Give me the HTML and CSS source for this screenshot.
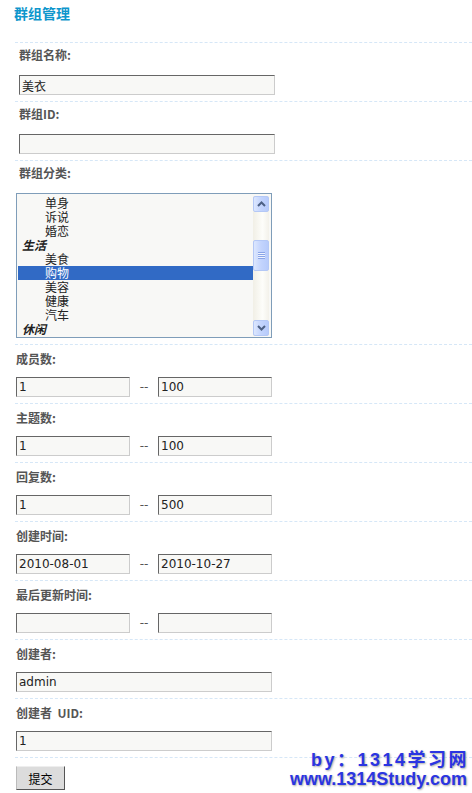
FILE: index.html
```html
<!DOCTYPE html>
<html lang="zh-CN">
<head>
    <meta charset="UTF-8">
    <title>群组管理</title>
    <link rel="stylesheet" href="styles.css">
</head>
<body>

    <div class="page">
        <h1 class="title">群组管理</h1>

        <form class="group-form">
            <div class="row row-top">
                <div class="row-label">群组名称:</div>
                <input class="field" type="text" value="美衣">
            </div>

            <div class="row row-top">
                <div class="row-label">群组ID:</div>
                <input class="field" type="text" value="">
            </div>

            <div class="row row-top row-list">
                <div class="row-label">群组分类:</div>
                <div class="listbox">
                    <div class="listbox-items">
                        <div class="opt">单身</div>
                        <div class="opt">诉说</div>
                        <div class="opt">婚恋</div>
                        <div class="opt opt-group">生活</div>
                        <div class="opt">美食</div>
                        <div class="opt opt-selected">购物</div>
                        <div class="opt">美容</div>
                        <div class="opt">健康</div>
                        <div class="opt">汽车</div>
                        <div class="opt opt-group">休闲</div>
                    </div>
                    <div class="scrollbar">
                        <div class="sb-btn">
                            <svg width="9" height="6" viewBox="0 0 9 6"><path d="M1 5 L4.5 1.5 L8 5" fill="none" stroke="#4d6185" stroke-width="2"/></svg>
                        </div>
                        <div class="sb-gap"></div>
                        <div class="sb-thumb"><span class="grip"></span></div>
                        <div class="sb-rest"></div>
                        <div class="sb-btn">
                            <svg width="9" height="6" viewBox="0 0 9 6"><path d="M1 1 L4.5 4.5 L8 1" fill="none" stroke="#4d6185" stroke-width="2"/></svg>
                        </div>
                    </div>
                </div>
            </div>

            <div class="row">
                <div class="row-label">成员数:</div>
                <div class="range">
                    <input class="field field-sm" type="text" value="1">
                    <span class="range-sep">--</span>
                    <input class="field field-sm" type="text" value="100">
                </div>
            </div>

            <div class="row">
                <div class="row-label">主题数:</div>
                <div class="range">
                    <input class="field field-sm" type="text" value="1">
                    <span class="range-sep">--</span>
                    <input class="field field-sm" type="text" value="100">
                </div>
            </div>

            <div class="row">
                <div class="row-label">回复数:</div>
                <div class="range">
                    <input class="field field-sm" type="text" value="1">
                    <span class="range-sep">--</span>
                    <input class="field field-sm" type="text" value="500">
                </div>
            </div>

            <div class="row">
                <div class="row-label">创建时间:</div>
                <div class="range">
                    <input class="field field-sm" type="text" value="2010-08-01">
                    <span class="range-sep">--</span>
                    <input class="field field-sm" type="text" value="2010-10-27">
                </div>
            </div>

            <div class="row">
                <div class="row-label">最后更新时间:</div>
                <div class="range">
                    <input class="field field-sm" type="text" value="">
                    <span class="range-sep">--</span>
                    <input class="field field-sm" type="text" value="">
                </div>
            </div>

            <div class="row">
                <div class="row-label">创建者:</div>
                <input class="field" type="text" value="admin">
            </div>

            <div class="row">
                <div class="row-label">创建者&nbsp; UID:</div>
                <input class="field" type="text" value="1">
            </div>

            <div class="row row-submit">
                <button class="submit" type="button">提交</button>
            </div>
        </form>
    </div>

    <div class="watermark">
        <div class="watermark-by">by：1314学习网</div>
        <div>www.1314Study.com</div>
    </div>

</body>
</html>
```

FILE: styles.css
```css
body {
    margin: 0;
    background-color: #fff;
    font-family: "DejaVu Sans", "Noto Sans CJK SC", sans-serif;
    font-size: 12px;
    color: #222;
}

.page {
    padding-left: 15px;
}

.title {
    margin: 0 0 20px -1px;
    padding-top: 4px;
    font-family: "Noto Sans CJK SC", sans-serif;
    font-size: 14px;
    line-height: 18px;
    font-weight: bold;
    color: #0e96cc;
}

.row {
    border-top: 1px dashed #d6e7f7;
    padding-bottom: 6px;
}

.row-label {
    margin: 4px 0 8px 1px;
    line-height: 20px;
    font-family: "Noto Sans CJK SC", sans-serif;
    font-weight: bold;
    color: #555;
}

.row-top .row-label {
    margin: 2px 0 10px 4px;
}

.field {
    display: block;
    box-sizing: border-box;
    width: 256px;
    height: 20px;
    margin: 0 0 0 1px;
    padding: 0 2px;
    border: 1px solid;
    border-color: #666 #ccc #ccc #666;
    background-color: #f8f8f6;
    font-family: "DejaVu Sans", "Noto Sans CJK SC", sans-serif;
    font-size: 12px;
    color: #222;
    outline: none;
}

.row-top .field {
    margin-left: 4px;
}

.range {
    display: flex;
    align-items: center;
}

.field-sm {
    width: 114px;
}

.range-sep {
    width: 28px;
    text-align: center;
    color: #555;
}

.range .field-sm + .range-sep + .field-sm {
    margin-left: 0;
}

/* list box */
.listbox {
    display: flex;
    box-sizing: border-box;
    width: 256px;
    height: 145px;
    margin-left: 1px;
    padding: 2px 2px 1px 1px;
    border: 1px solid #7f9db9;
    background-color: #f8f8f6;
}

.listbox-items {
    flex: 1;
    overflow: hidden;
    font-family: "Noto Sans CJK SC", sans-serif;
}

.opt {
    height: 14px;
    line-height: 14px;
    padding-left: 27px;
    white-space: nowrap;
    color: #222;
}

.opt-group {
    padding-left: 4px;
    font-weight: bold;
    font-style: italic;
}

.opt-selected {
    background-color: #316ac5;
    color: #fff;
}

.scrollbar {
    display: flex;
    flex-direction: column;
    width: 16px;
    background: linear-gradient(to right, #f1efe6, #fdfdfa 60%, #f3f1ea);
}

.sb-btn,
.sb-thumb {
    box-sizing: border-box;
    display: flex;
    align-items: center;
    justify-content: center;
    border: 1px solid #b4c8f6;
    border-radius: 2px;
    background: linear-gradient(to right, #dce7fe, #c3d4fd 50%, #b7cbfb);
}

.sb-btn {
    height: 16px;
}

.sb-gap {
    height: 28px;
}

.sb-thumb {
    height: 31px;
}

.sb-rest {
    flex: 1;
}

.grip {
    display: block;
    width: 7px;
    height: 7px;
    background: repeating-linear-gradient(to bottom, #8aa5e8 0, #8aa5e8 1px, #eef3fe 1px, #eef3fe 2px);
}

/* submit */
.row-submit {
    padding-top: 8px;
}

.submit {
    display: block;
    box-sizing: border-box;
    width: 49px;
    height: 24px;
    margin-left: 1px;
    padding: 0;
    border: 1px solid;
    border-color: #eee #555 #555 #bbb;
    background-color: #dcdcdc;
    font-family: "Noto Sans CJK SC", sans-serif;
    font-size: 12px;
    color: #000;
}

/* overlay watermark */
.watermark {
    position: absolute;
    right: 5px;
    top: 751px;
    text-align: right;
    font-family: "Liberation Sans", "Noto Sans CJK SC", sans-serif;
    font-size: 18px;
    line-height: 19px;
    font-weight: bold;
    color: #2a35e2;
    text-shadow: 1px 1px 2px #aaa;
}

.watermark-by {
    margin-right: -2px;
    letter-spacing: 2.5px;
}
```
